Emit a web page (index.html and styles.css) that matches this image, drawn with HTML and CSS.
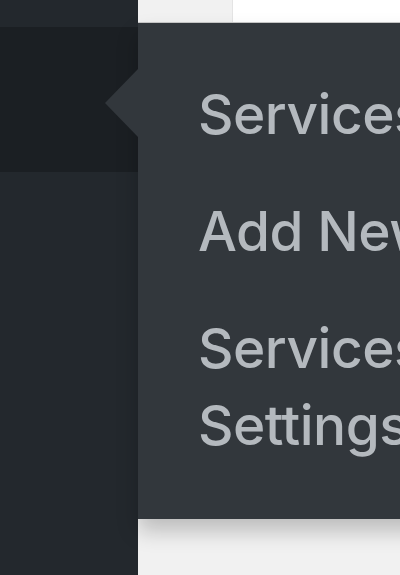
FILE: index.html
```html
<!DOCTYPE html>
<html lang="en">
<head>
  <meta charset="UTF-8" />
  <meta name="viewport" content="width=device-width, initial-scale=1.0"/>
  <title>Services menu</title>
  <link rel="stylesheet" href="styles.css">
</head>
<body>
  <div class="admin">
    <div class="sidebar">
      <div class="menu-item top"></div>
      <div class="menu-item current"></div>
      <div class="menu-item rest"></div>
    </div>

    <div class="content">
      <div class="toolbar">
        <div class="toolbar-tab"></div>
        <div class="toolbar-fill"></div>
      </div>
      <div class="page"></div>

      <div class="flyout">
        <span class="flyout-arrow"></span>
        <ul class="submenu">
          <li><a href="#">Services</a></li>
          <li><a href="#">Add New</a></li>
          <li><a href="#">Services Settings</a></li>
        </ul>
      </div>
    </div>
  </div>
</body>
</html>
```

FILE: styles.css
```css
* {
  margin: 0;
  padding: 0;
  box-sizing: border-box;
}

html, body {
  height: 100%;
  overflow: hidden;
}

body {
  font-family: Inter, "Noto Sans", sans-serif;
  background: #f1f1f1;
}

.admin {
  display: flex;
  height: 100%;
}

.sidebar {
  width: 138px;
  flex-shrink: 0;
  display: flex;
  flex-direction: column;
  background: #23282d;
}

.menu-item.top {
  height: 27px;
}

.menu-item.current {
  height: 145px;
  background: #1b1f23;
}

.menu-item.rest {
  flex: 1;
}

.content {
  position: relative;
  flex: 1;
  display: flex;
  flex-direction: column;
}

.toolbar {
  display: flex;
  height: 23px;
  border-bottom: 1px solid #c9c9c9;
}

.toolbar-tab {
  width: 95px;
  background: #f1f1f1;
  border-right: 1px solid #e4e4e4;
}

.toolbar-fill {
  flex: 1;
  background: #fff;
}

.page {
  flex: 1;
  background: #f1f1f1;
}

.flyout {
  position: absolute;
  top: 23px;
  left: 0;
  width: 420px;
  background: #32373c;
  box-shadow: 0 12px 20px rgba(0, 0, 0, 0.22);
}

.flyout-arrow {
  position: absolute;
  top: 46px;
  left: -33px;
  border-right: 33px solid #32373c;
  border-top: 34px solid transparent;
  border-bottom: 34px solid transparent;
}

.submenu {
  list-style: none;
  padding: 33px 0 35px;
}

.submenu a {
  display: block;
  padding: 20px 40px 20px 60px;
  font-size: 55px;
  font-weight: 500;
  letter-spacing: -0.5px;
  line-height: 77px;
  color: #b4b9be;
  text-decoration: none;
}
```
